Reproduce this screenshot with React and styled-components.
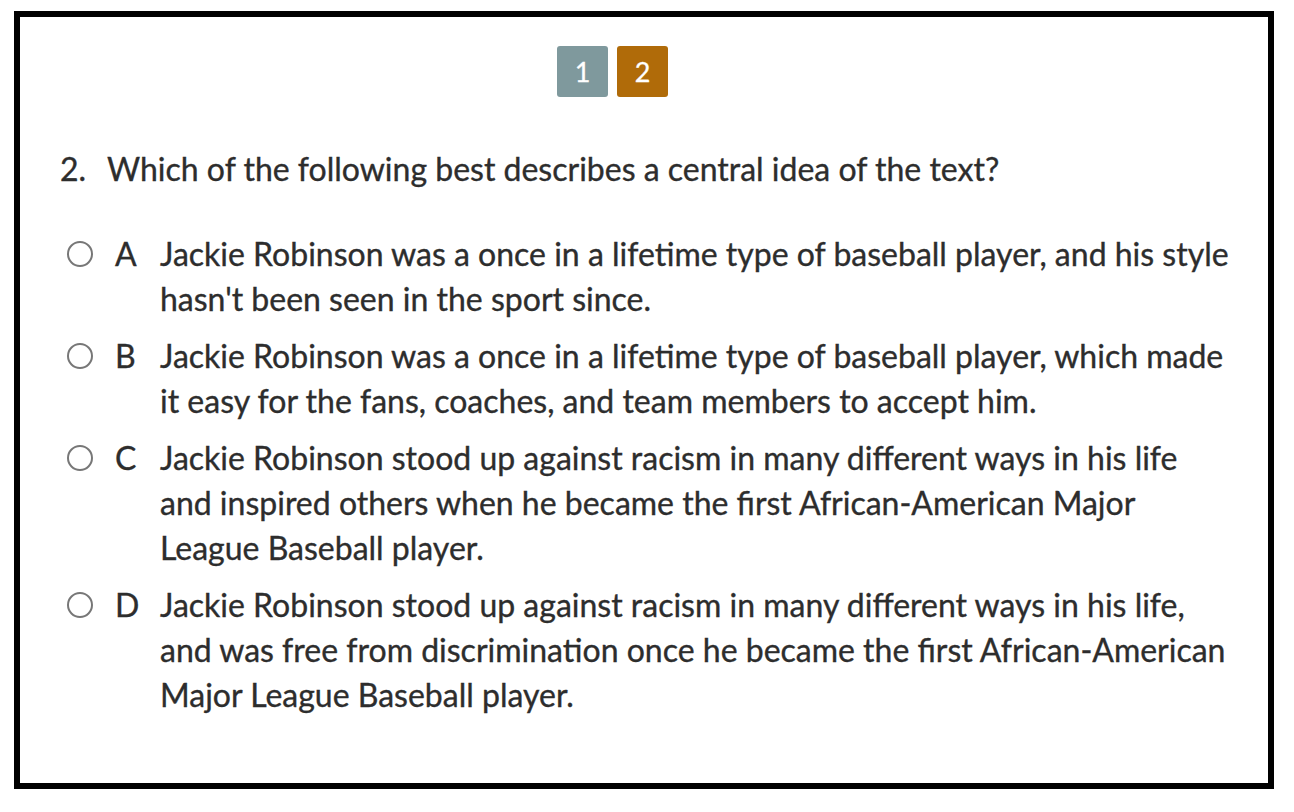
import React from 'react';
import styled, { createGlobalStyle } from 'styled-components';

const GlobalStyle = createGlobalStyle`
    html, body {
        margin: 0;
        padding: 0;
        background: #ffffff;
    }
    body {
        font-family: Lato, "Open Sans", sans-serif;
        color: #2d2d2d;
    }
`

const Frame = styled.div`
    box-sizing: border-box;
    width: 1260px;
    height: 778px;
    margin: 11px 0 0 14px;
    border: 6px solid #000000;
    background: #ffffff;
    padding: 29px 20px 0 40px;
`

const Pager = styled.div`
    display: flex;
    gap: 9px;
    padding-left: 497px;
`

const PageButton = styled.button`
    width: 51px;
    height: 51px;
    border: none;
    border-radius: 3px;
    background: ${({ active }) => (active ? '#b06b09' : '#7f999d')};
    color: #ffffff;
    font-family: Lato, sans-serif;
    font-size: 27px;
    padding: 0;
    cursor: pointer;
    -webkit-text-stroke: 0.3px #ffffff;
`

const Question = styled.div`
    display: flex;
    margin-top: 49px;
    font-size: 32px;
    line-height: 45px;
    -webkit-text-stroke: 0.35px #2d2d2d;

    .num {
        width: 47px;
        flex-shrink: 0;
    }
`

const Options = styled.div`
    display: flex;
    flex-direction: column;
    gap: 12px;
    margin-top: 40px;
    padding-left: 7px;
`

const Option = styled.label`
    display: flex;
    align-items: flex-start;
    font-size: 32px;
    line-height: 45px;
    cursor: pointer;
    -webkit-text-stroke: 0.35px #2d2d2d;
`

const Radio = styled.span`
    box-sizing: border-box;
    flex-shrink: 0;
    width: 26px;
    height: 26px;
    margin-top: 10px;
    border: 2px solid #777777;
    border-radius: 50%;
`

const Letter = styled.span`
    flex-shrink: 0;
    width: 45px;
    margin-left: 22px;
`

const Answer = styled.span`
    width: 1071px;
`

const answers = [
    ['A', "Jackie Robinson was a once in a lifetime type of baseball player, and his style hasn't been seen in the sport since."],
    ['B', 'Jackie Robinson was a once in a lifetime type of baseball player, which made it easy for the fans, coaches, and team members to accept him.'],
    ['C', 'Jackie Robinson stood up against racism in many different ways in his life and inspired others when he became the first African-American Major League Baseball player.'],
    ['D', 'Jackie Robinson stood up against racism in many different ways in his life, and was free from discrimination once he became the first African-American Major League Baseball player.'],
]

const App = () => {
    return (
        <>
            <GlobalStyle />
            <Frame>
                <Pager>
                    <PageButton>1</PageButton>
                    <PageButton active>2</PageButton>
                </Pager>
                <Question>
                    <span className="num">2.</span>
                    <span>Which of the following best describes a central idea of the text?</span>
                </Question>
                <Options>
                    {answers.map(([letter, text]) => (
                        <Option key={letter}>
                            <Radio />
                            <Letter>{letter}</Letter>
                            <Answer>{text}</Answer>
                        </Option>
                    ))}
                </Options>
            </Frame>
        </>
    );
};

export default App;
